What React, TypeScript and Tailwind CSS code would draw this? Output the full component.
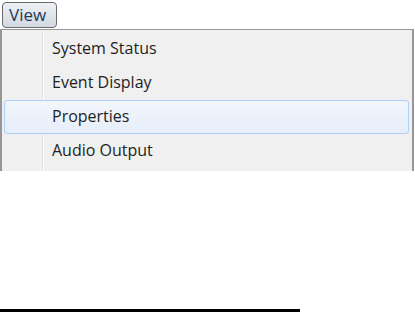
const items = ["System Status", "Event Display", "Properties", "Audio Output"];

export default function App() {
  return (
    <div className="w-[415px] h-[312px] bg-white relative overflow-hidden font-['Open_Sans',sans-serif] text-[#1e1e1e]">
      <div className="pt-[2px] pl-[2px]">
        <div className="w-[55px] h-[26px] rounded-[4px] border border-[#6b6b6b] bg-gradient-to-b from-[#eef1f5] to-[#d3d9e2] text-[#1e395b] text-[17px] leading-[23px] pl-[6px]">
          View
        </div>
      </div>
      <div className="mt-[1px] w-[414px] h-[142px] border-t border-l-2 border-r-2 border-[#979797] bg-[#f0f0f0] flex">
        <div className="w-[41px] border-r border-[#e2e2e2] shadow-[1px_0_0_#ffffff]" />
        <div className="flex-1 pt-[2px] -ml-[39px] pr-[3px]">
          {items.map((it) => (
            <div
              key={it}
              className={
                it === "Properties"
                  ? "h-[34px] rounded-[3px] border border-[#aecff7] bg-gradient-to-b from-[#f2f6fc] to-[#e6eefa] pl-[47px] text-[16px] leading-[31px]"
                  : "h-[34px] border border-transparent pl-[47px] text-[16px] leading-[31px]"
              }
            >
              {it}
            </div>
          ))}
        </div>
      </div>
      <div className="absolute left-0 top-[309px] w-[300px] h-[3px] bg-black" />
    </div>
  );
}
